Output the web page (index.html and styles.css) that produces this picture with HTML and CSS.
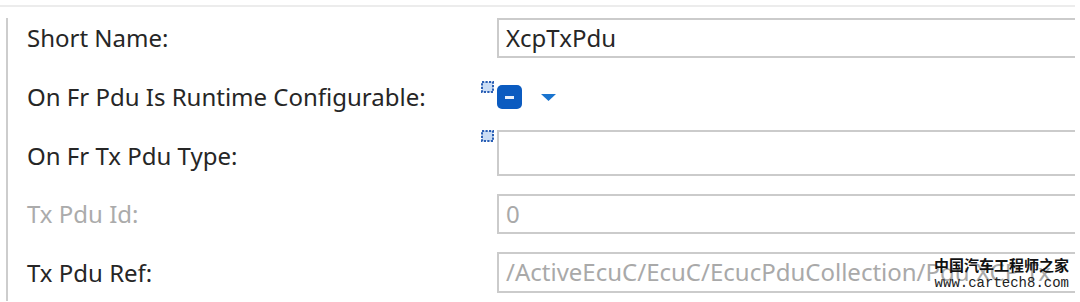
FILE: index.html
```html
<!DOCTYPE html>
<html>
  <head>
    <link rel="stylesheet" href="styles.css">
  </head>
  <body>
    <div class="frame">
      <div class="panel">
        <div class="row row-name">
          <span class="label">Short Name:</span>
          <div class="value">
            <div class="field">XcpTxPdu</div>
          </div>
        </div>

        <div class="row row-runtime">
          <span class="label">On Fr Pdu Is Runtime Configurable:</span>
          <div class="value">
            <svg class="marker" width="13" height="12" viewBox="0 0 13 12">
              <rect x="1" y="1" width="11" height="10" fill="#c9dcf5" stroke="#2a5fb5" stroke-width="2" stroke-dasharray="2.2 1.3"/>
            </svg>
            <span class="toggle"><span class="minus"></span></span>
            <svg class="caret" width="15" height="8" viewBox="0 0 15 8">
              <path d="M0 0 L15 0 L7.5 7 Z" fill="#1a74cf"/>
            </svg>
          </div>
        </div>

        <div class="row row-type">
          <span class="label">On Fr Tx Pdu Type:</span>
          <div class="value">
            <svg class="marker" width="13" height="12" viewBox="0 0 13 12">
              <rect x="1" y="1" width="11" height="10" fill="#c9dcf5" stroke="#2a5fb5" stroke-width="2" stroke-dasharray="2.2 1.3"/>
            </svg>
            <div class="field tall"></div>
          </div>
        </div>

        <div class="row row-id">
          <span class="label disabled">Tx Pdu Id:</span>
          <div class="value">
            <div class="field muted">0</div>
          </div>
        </div>

        <div class="row row-ref">
          <span class="label">Tx Pdu Ref:</span>
          <div class="value">
            <div class="field muted">/ActiveEcuC/EcuC/EcucPduCollection/Pdu XCP Tx</div>
          </div>
        </div>
      </div>

      <div class="watermark">
        <div class="wm-cn">中国汽车工程师之家</div>
        <div class="wm-url">www.cartech8.com</div>
      </div>
    </div>
  </body>
</html>
```

FILE: styles.css
```css
body {
  margin: 0;
  background-color: #fff;
  font-family: "Noto Sans", "Open Sans", sans-serif;
  overflow: hidden;
}

.frame {
  position: relative;
  width: 1075px;
  height: 296px;
  margin-top: 5px;
  padding-top: 7px;
  border-top: 2px solid #ececec;
  box-sizing: border-box;
  overflow: hidden;
}

.panel {
  margin-left: 6px;
  padding-left: 19px;
  height: 300px;
  border-left: 2px solid #cdcdcd;
}

.row {
  display: grid;
  grid-template-columns: 454px 1fr;
  align-items: center;
}

.label {
  font-size: 24px;
  line-height: 32px;
  color: #262626;
  white-space: nowrap;
}

.label.disabled {
  color: #ababab;
}

.value {
  display: flex;
  align-items: center;
  padding-left: 16px;
}

.field {
  flex: 1;
  height: 40px;
  margin-right: -10px;
  padding-left: 7px;
  border: 2px solid #cbcbcb;
  box-sizing: border-box;
  font-size: 24px;
  line-height: 35px;
  color: #262626;
  white-space: nowrap;
  overflow: hidden;
}

.field.tall {
  height: 46px;
}

.field.muted {
  color: #a9a9a9;
}

.row-name {
  height: 40px;
  margin-top: 4px;
}

.row-runtime {
  height: 72px;
  align-items: start;
}

.row-runtime .label {
  padding-top: 23px;
}

.row-runtime .value,
.row-type .value {
  align-items: flex-start;
  padding-left: 0;
}

.row-runtime .marker {
  margin-top: 23px;
  margin-right: 3px;
}

.toggle {
  display: flex;
  align-items: center;
  justify-content: center;
  width: 25px;
  height: 24px;
  margin-top: 27px;
  border-radius: 5px;
  background-color: #0b5bc0;
}

.minus {
  width: 9px;
  height: 3px;
  background-color: #e8f0fb;
}

.caret {
  margin-top: 36px;
  margin-left: 19px;
}

.row-type {
  height: 46px;
}

.row-type .label {
  padding-top: 6px;
}

.row-type .marker {
  margin-right: 3px;
}

.row-id {
  height: 40px;
  margin-top: 18px;
}

.row-ref {
  height: 41px;
  margin-top: 18px;
}

.row-ref .field {
  height: 41px;
}

.watermark {
  position: absolute;
  left: 934px;
  top: 247px;
  color: #111;
  text-align: right;
}

.wm-cn {
  font-family: "Noto Sans CJK SC", sans-serif;
  font-size: 15px;
  font-weight: 700;
  line-height: 21px;
}

.wm-url {
  font-family: "Liberation Mono", monospace;
  font-size: 14px;
  line-height: 17px;
  color: #222;
}
```
